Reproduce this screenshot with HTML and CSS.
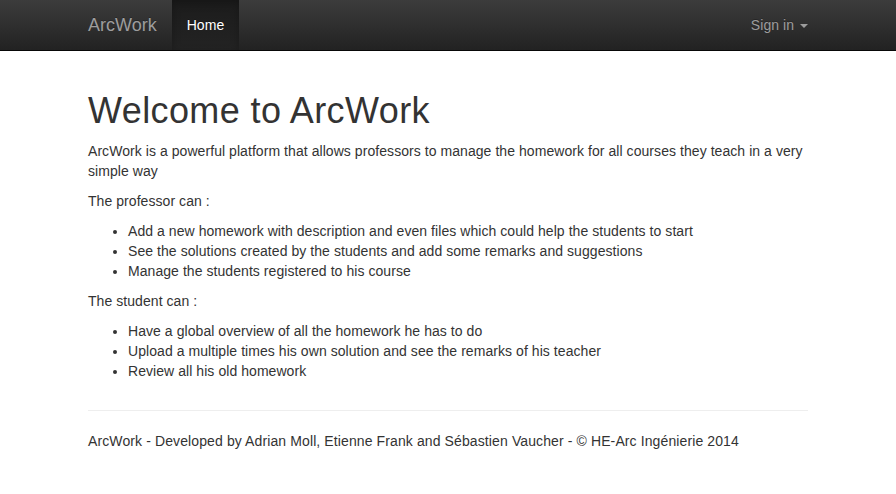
FILE: index.html
```html
<!DOCTYPE html>
<html>
<head>
<meta charset="utf-8">
<title>ArcWork</title>
<link rel="stylesheet" href="styles.css">
</head>
<body>
<nav class="navbar">
  <div class="container nav-inner">
    <div class="nav-left">
      <a class="brand" href="#">ArcWork</a>
      <a class="nav-link active" href="#">Home</a>
    </div>
    <div class="nav-right">
      <a class="nav-link" href="#">Sign in <span class="caret"></span></a>
    </div>
  </div>
</nav>
<main class="container">
  <h1>Welcome to ArcWork</h1>
  <p>ArcWork is a powerful platform that allows professors to manage the homework for all courses they teach in a very simple way</p>
  <p>The professor can :</p>
  <ul>
    <li>Add a new homework with description and even files which could help the students to start</li>
    <li>See the solutions created by the students and add some remarks and suggestions</li>
    <li>Manage the students registered to his course</li>
  </ul>
  <p>The student can :</p>
  <ul>
    <li>Have a global overview of all the homework he has to do</li>
    <li>Upload a multiple times his own solution and see the remarks of his teacher</li>
    <li>Review all his old homework</li>
  </ul>
  <hr class="divider">
  <footer class="footer">
    <p>ArcWork - Developed by Adrian Moll, Etienne Frank and Sébastien Vaucher - © HE-Arc Ingénierie 2014</p>
  </footer>
</main>
</body>
</html>
```
FILE: styles.css
```css
* { box-sizing: border-box; }
html, body { margin: 0; padding: 0; }
body {
  font-family: "Liberation Sans", Arial, sans-serif;
  font-size: 14px;
  line-height: 20px;
  letter-spacing: 0.06px;
  color: #333;
  background: #fff;
  padding-top: 71px;
}
a { text-decoration: none; }
.container {
  width: 750px;
  margin: 0 auto;
  padding: 0 15px;
}
.navbar {
  position: fixed;
  top: 0; left: 0; right: 0;
  height: 51px;
  background-color: #222;
  background-image: linear-gradient(to bottom, #3c3c3c 0, #222 100%);
  border-bottom: 1px solid #080808;
}
.nav-inner {
  display: flex;
  justify-content: space-between;
  height: 50px;
}
.nav-left { display: flex; margin-left: -15px; }
.nav-right { display: flex; margin-right: -15px; }
.brand {
  display: block;
  height: 50px;
  padding: 15px;
  font-size: 18px;
  line-height: 20px;
  letter-spacing: 0;
  color: #9d9d9d;
  text-shadow: 0 -1px 0 rgba(0,0,0,.25);
}
.nav-link {
  display: block;
  padding: 15px;
  line-height: 20px;
  color: #9d9d9d;
  text-shadow: 0 -1px 0 rgba(0,0,0,.25);
}
.nav-link.active {
  color: #fff;
  background-color: #1e1e1e;
  background-image: linear-gradient(to bottom, #1c1c1c 0, #232323 100%);
  box-shadow: inset 0 3px 9px rgba(0,0,0,.25);
}
.caret {
  display: inline-block;
  width: 0; height: 0;
  margin-left: 2px;
  vertical-align: middle;
  border-top: 4px solid #9d9d9d;
  border-left: 4px solid transparent;
  border-right: 4px solid transparent;
}
h1 {
  font-size: 36px;
  font-weight: 500;
  line-height: 1.1;
  letter-spacing: 0.4px;
  margin: 20px 0 10px;
}
p { margin: 0 0 10px; }
ul { margin: 0 0 10px; padding-left: 40px; }
.divider {
  margin: 29px 0 20px;
  border: 0;
  border-top: 1px solid #eee;
}
.footer p { margin: 0 0 10px; letter-spacing: 0.11px; }
```
